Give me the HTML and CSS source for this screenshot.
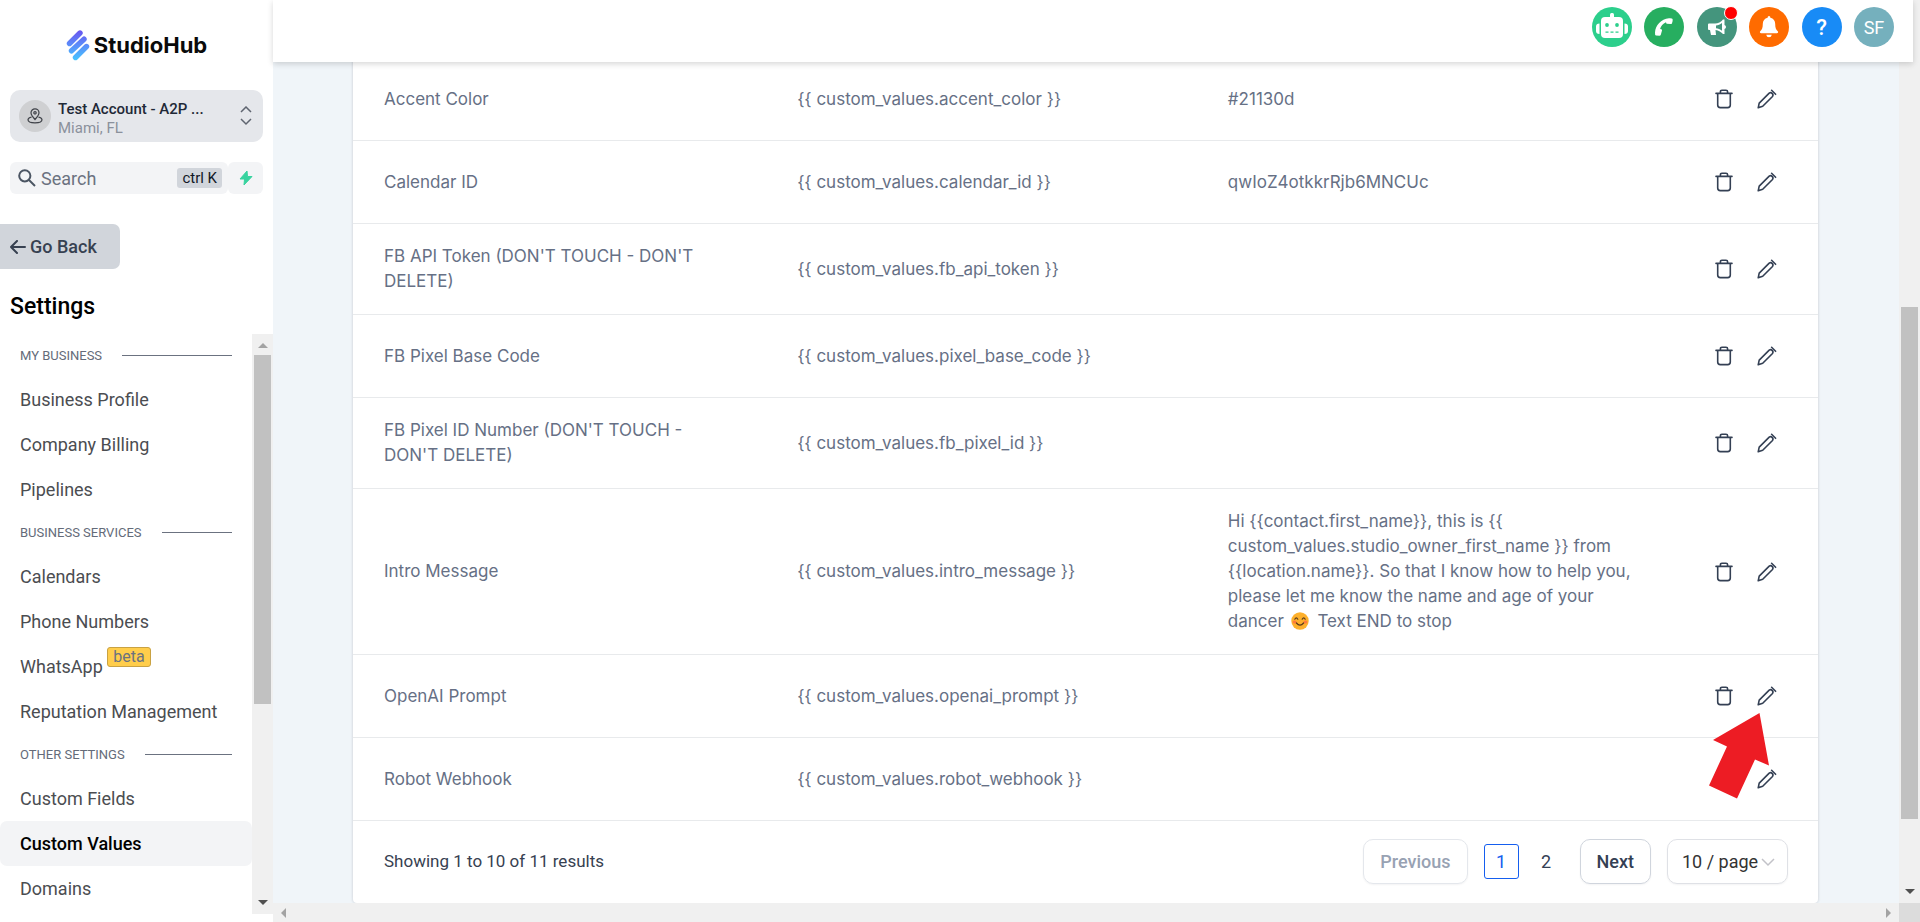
FILE: index.html
```html
<!DOCTYPE html>
<html lang="en">
<head>
<meta charset="utf-8">
<title>StudioHub - Custom Values</title>
<link rel="stylesheet" href="styles.css">
</head>
<body>
<svg class="sprite" aria-hidden="true">
  <symbol id="trash" viewBox="0 0 20 20"><path d="M2 4.4h16M6.4 4.2v-1.400q0-1.600 1.600-1.600h4q1.600 0 1.600 1.600v1.400M3.700 4.600v11.400q0 2.600 2.600 2.600h7.400q2.600 0 2.600-2.600V4.600"/></symbol>
  <symbol id="pencil" viewBox="0 0 20 20"><path d="M1.200 18.800l1-4.700L12.200 4.100q1.600-1 2.900.3 1.600 1.500.4 3.100L5.700 17.300zM14.600 1.300l4 4"/></symbol>
</svg>
<div class="app">
  <aside class="sidebar">
    <a class="logo" href="#" aria-label="StudioHub home">
      <svg width="24" height="32" viewBox="0 0 24 32" fill="none" stroke-linecap="round" stroke-width="5.400" aria-hidden="true">
        <defs><linearGradient id="lg" gradientUnits="userSpaceOnUse" x1="12" y1="0" x2="12" y2="32"><stop offset="0" stop-color="#6a4fee"/><stop offset=".5" stop-color="#5b8cf9"/><stop offset="1" stop-color="#45c8ff"/></linearGradient></defs>
        <path stroke="url(#lg)" d="M3.500 14.500L14 4M5.500 21.800L18 10.200M9.500 28.500L20.500 17.500"/>
      </svg>
      <span>StudioHub</span>
    </a>
    <button class="account" type="button">
      <span class="pin">
        <svg width="16" height="16" viewBox="0 0 16 16" fill="none" stroke="#3f4248" stroke-width="1.200" aria-hidden="true"><path d="M8 11.500C5.600 8.900 4 7 4 4.800a4 4 0 0 1 8 0C12 7 10.400 8.900 8 11.500z"/><circle cx="8" cy="4.800" r="1.200"/><path d="M4.600 9C2.500 9.500 1 10.400 1 11.700c0 1.900 3.100 3.100 7 3.100s7-1.200 7-3.100c0-1.300-1.500-2.200-3.600-2.700"/></svg>
      </span>
      <span class="account-text"><span class="account-name">Test Account - A2P ...</span><span class="account-place">Miami, FL</span></span>
      <svg class="chevrons" width="12" height="20" viewBox="0 0 12 20" fill="none" stroke="#5f6570" stroke-width="1.500" aria-hidden="true"><path d="M1 6l5-5 5 5M1 13l5 5 5-5"/></svg>
    </button>
    <div class="search-row">
      <label class="search">
        <svg width="18" height="18" viewBox="0 0 18 18" fill="none" stroke="#4b5563" stroke-width="2" aria-hidden="true"><circle cx="6.800" cy="6.800" r="5.600"/><path d="M11 11l6 6"/></svg>
        <input type="text" placeholder="Search" aria-label="Search">
        <kbd>ctrl K</kbd>
      </label>
      <button class="bolt" type="button" aria-label="Quick actions">
        <svg width="14" height="16" viewBox="0 0 14 16" fill="#38d39f" stroke="#38d39f" stroke-width="1" stroke-linejoin="round" aria-hidden="true"><path d="M8 1L1 9h4.500L5 15l8-8.500H8.500z"/></svg>
      </button>
    </div>
    <button class="back" type="button">
      <svg width="16" height="14" viewBox="0 0 16 14" fill="none" stroke="#374151" stroke-width="2" stroke-linecap="round" stroke-linejoin="round" aria-hidden="true"><path d="M7 1L1 7l6 6M1 7h14"/></svg>
      Go Back
    </button>
    <h1>Settings</h1>
    <div class="nav-wrap">
      <nav aria-label="Settings">
        <h2>MY BUSINESS</h2>
        <a href="#">Business Profile</a>
        <a href="#">Company Billing</a>
        <a href="#">Pipelines</a>
        <h2>BUSINESS SERVICES</h2>
        <a href="#">Calendars</a>
        <a href="#">Phone Numbers</a>
        <a href="#">WhatsApp <span class="beta">beta</span></a>
        <a href="#">Reputation Management</a>
        <h2>OTHER SETTINGS</h2>
        <a href="#">Custom Fields</a>
        <a href="#" class="active" aria-current="page">Custom Values</a>
        <a href="#">Domains</a>
      </nav>
      <div class="vbar" aria-hidden="true">
        <svg class="tip light" viewBox="0 0 10 5"><path d="M0 5L5 0l5 5z"/></svg>
        <div class="track nav-track"><div class="thumb"></div></div>
        <svg class="tip" viewBox="0 0 10 5"><path d="M0 0l5 5 5-5z"/></svg>
      </div>
    </div>
  </aside>
  <div class="page">
    <header>
      <div class="tools">
        <button class="tool robot" type="button" aria-label="Assistant"><svg width="34" height="28" viewBox="0 0 34 28" fill="#fff" aria-hidden="true"><rect x="6" y="4" width="22" height="21" rx="4"/><rect x="15" y="0" width="4" height="6" rx="1.500"/><path d="M4.500 10.500v10.500Q1 21 1 18v-4.500q0-3 3.500-3zM29.500 10.500v10.500Q33 21 33 18v-4.500q0-3-3.500-3z"/><g fill="#2ccf8c"><circle cx="12" cy="12" r="1.900"/><circle cx="22" cy="12" r="1.900"/><path d="M10.500 18.500h3v1.300h-3zM15.500 18.500h3v1.300h-3zM20.500 18.500h3v1.300h-3z"/></g></svg></button>
        <button class="tool phone" type="button" aria-label="Call"><svg width="20" height="20" viewBox="0 0 20 20" fill="#fff" aria-hidden="true"><path d="M1 15.500C1.500 8 7 2 15 1.200q3.300-.2 3.600.8.400 2-.6 4.200-.4 1-1.400.9l-3.800-.3q-.8-.1-.7-1.200l-.1-.4C9 6.500 6.700 9.200 6.100 12l1.200.3q1 .3.700 1.200L6.800 17.700q-.3 1-1.300 1L2 18.500q-1.200-.2-1-3z"/></svg></button>
        <button class="tool horn" type="button" aria-label="Announcements"><svg width="20" height="18" viewBox="0 0 20 18" aria-hidden="true"><path fill="#fff" fill-rule="evenodd" d="M2 5.500H8c3 0 6-1.500 8-4h1.500v5.500q1.500.7 1.500 2t-1.500 2v5H16c-1.500-1.800-4.500-3.600-7.500-4l.5 5H4L3 12H2Q1 12 1 11V6.500q0-1 1-1zM15 5C13.200 6.500 11 7.300 9 7.500v2.700c2 .3 4.200 1 6 2.500z"/></svg><span class="dot"></span></button>
        <button class="tool bell" type="button" aria-label="Notifications"><svg width="20" height="22" viewBox="0 0 20 22" fill="#fff" aria-hidden="true"><path d="M10 0q1.400 0 1.400 1.700c3.100.7 4.800 3 4.800 6.300 0 4 .8 5.500 2.600 7.200q.7.800.1 1.600-.3.400-1 .4H2.100q-.7 0-1-.4-.6-.8.100-1.600C3 13.500 3.800 12 3.800 8c0-3.300 1.700-5.600 4.800-6.300Q8.600 0 10 0zM7.200 18.800h5.600Q12.300 21.300 10 21.300T7.200 18.800z"/></svg></button>
        <button class="tool help" type="button" aria-label="Help">?</button>
        <button class="tool user" type="button" aria-label="Profile">SF</button>
      </div>
    </header>
    <div class="body">
      <main>
        <section class="card">
          <table aria-label="Custom values">
            <colgroup><col class="c-name"><col class="c-key"><col class="c-value"><col class="c-act"></colgroup>
            <tbody>
              <tr><td>Accent Color</td><td>{{ custom_values.accent_color }}</td><td>#21130d</td><td><div class="acts"><button type="button" aria-label="Delete"><svg><use href="#trash"/></svg></button><button type="button" aria-label="Edit"><svg><use href="#pencil"/></svg></button></div></td></tr>
              <tr><td>Calendar ID</td><td>{{ custom_values.calendar_id }}</td><td>qwIoZ4otkkrRjb6MNCUc</td><td><div class="acts"><button type="button" aria-label="Delete"><svg><use href="#trash"/></svg></button><button type="button" aria-label="Edit"><svg><use href="#pencil"/></svg></button></div></td></tr>
              <tr><td>FB API Token (DON'T TOUCH - DON'T DELETE)</td><td>{{ custom_values.fb_api_token }}</td><td></td><td><div class="acts"><button type="button" aria-label="Delete"><svg><use href="#trash"/></svg></button><button type="button" aria-label="Edit"><svg><use href="#pencil"/></svg></button></div></td></tr>
              <tr><td>FB Pixel Base Code</td><td>{{ custom_values.pixel_base_code }}</td><td></td><td><div class="acts"><button type="button" aria-label="Delete"><svg><use href="#trash"/></svg></button><button type="button" aria-label="Edit"><svg><use href="#pencil"/></svg></button></div></td></tr>
              <tr><td>FB Pixel ID Number (DON'T TOUCH - DON'T DELETE)</td><td>{{ custom_values.fb_pixel_id }}</td><td></td><td><div class="acts"><button type="button" aria-label="Delete"><svg><use href="#trash"/></svg></button><button type="button" aria-label="Edit"><svg><use href="#pencil"/></svg></button></div></td></tr>
              <tr><td>Intro Message</td><td>{{ custom_values.intro_message }}</td><td>Hi {{contact.first_name}}, this is {{ custom_values.studio_owner_first_name }} from {{location.name}}. So that I know how to help you, please let me know the name and age of your dancer <svg class="smile" viewBox="0 0 18 18" aria-hidden="true"><circle cx="9" cy="9" r="8.700" fill="#fdb02c"/><ellipse cx="3.600" cy="10" rx="2" ry="1.600" fill="#ff7a3d"/><ellipse cx="14.400" cy="10" rx="2" ry="1.600" fill="#ff7a3d"/><path d="M3.800 7.200q1.500-2.600 3 0M11.200 7.200q1.500-2.600 3 0M5.400 11q3.600 4.400 7.200 0" fill="none" stroke="#5b3a1c" stroke-width="1.200" stroke-linecap="round"/></svg> Text END to stop</td><td><div class="acts"><button type="button" aria-label="Delete"><svg><use href="#trash"/></svg></button><button type="button" aria-label="Edit"><svg><use href="#pencil"/></svg></button></div></td></tr>
              <tr><td>OpenAI Prompt</td><td>{{ custom_values.openai_prompt }}</td><td></td><td><div class="acts"><button type="button" aria-label="Delete"><svg><use href="#trash"/></svg></button><button type="button" aria-label="Edit"><svg><use href="#pencil"/></svg></button></div></td></tr>
              <tr><td>Robot Webhook</td><td>{{ custom_values.robot_webhook }}</td><td></td><td><div class="acts"><button type="button" aria-label="Delete"><svg><use href="#trash"/></svg></button><button type="button" aria-label="Edit"><svg><use href="#pencil"/></svg></button><svg class="pointer" viewBox="0 0 60 86" aria-hidden="true"><path fill="#ed1c24" d="M50.500 0L60 52.500 46 46.500 28 85.500 0 72.500 18 33.500 4 27z"/></svg></div></td></tr>
            </tbody>
          </table>
          <footer>
            <p>Showing 1 to 10 of 11 results</p>
            <div class="pager">
              <button class="step" type="button" disabled>Previous</button>
              <div class="pages"><button class="num current" type="button" aria-current="page">1</button><button class="num" type="button">2</button></div>
              <button class="step" type="button">Next</button>
              <div class="size">
                <select aria-label="Rows per page"><option>10 / page</option></select>
                <svg width="14" height="9" viewBox="0 0 14 9" fill="none" stroke="#c2c2c8" stroke-width="1.500" aria-hidden="true"><path d="M1 1l6 6 6-6"/></svg>
              </div>
            </div>
          </footer>
        </section>
      </main>
      <div class="vbar page-vbar" aria-hidden="true">
        <div class="track page-track"><div class="thumb"></div></div>
        <svg class="tip" viewBox="0 0 10 5"><path d="M0 0l5 5 5-5z"/></svg>
      </div>
    </div>
    <div class="hbar" aria-hidden="true">
      <div class="hbar-run"><svg viewBox="0 0 5 10"><path d="M5 0L0 5l5 5z"/></svg><svg viewBox="0 0 5 10"><path d="M0 0l5 5-5 5z"/></svg></div>
      <div class="corner"></div>
    </div>
  </div>
</div>
</body>
</html>
```
FILE: styles.css
```css
* { box-sizing: border-box; }
body { margin: 0; font: 18px/25px Roboto, sans-serif; color: #374151; background: #fff; }
button, input, select { font: inherit; color: inherit; border: 0; margin: 0; padding: 0; background: none; }
button { cursor: pointer; }
h1, h2, p { margin: 0; }
svg { flex: none; }
.sprite { position: absolute; width: 0; height: 0; }
.app { display: flex; height: 100vh; overflow: hidden; }

.sidebar { display: flex; flex-direction: column; flex: none; width: 273px; padding-bottom: 8px; background: #fff; }
.logo { display: flex; align-items: center; justify-content: center; gap: 4px; height: 90px; color: #0a0a0a; text-decoration: none; font: bold 22px/32px Inter, sans-serif; }
.account { display: flex; align-items: center; gap: 7px; height: 52px; margin: 0 10px; padding: 0 11px 0 9px; border-radius: 10px; background: #e5e7eb; text-align: left; }
.pin { display: grid; place-items: center; flex: none; width: 32px; height: 32px; border-radius: 50%; background: #cfd0d2; }
.account-text { display: flex; flex-direction: column; flex: 1; padding-top: 5px; line-height: 19px; white-space: nowrap; }
.account-name { color: #1f2937; font-size: 15px; font-weight: 500; }
.account-place { color: #8b919c; font-size: 15px; }
.search-row { display: flex; height: 32px; margin: 20px 10px 0; }
.search { display: flex; align-items: center; flex: 1; gap: 5px; min-width: 0; padding: 0 6px 0 8px; border-radius: 6px; background: #f3f4f6; }
.search input { flex: 1; min-width: 0; width: 0; outline: 0; }
.search input::placeholder { color: #6b7280; opacity: 1; }
kbd { padding: 0 5px; border-radius: 3px; background: #d1d5db; color: #111827; font: 15px/20px Roboto, sans-serif; }
.bolt { display: grid; place-items: center; width: 35px; border-radius: 6px; background: #f3f4f6; }
.back { display: flex; align-items: center; align-self: flex-start; gap: 4px; width: 120px; height: 45px; margin-top: 30px; padding-left: 10px; border-radius: 0 7px 7px 0; background: #d1d5db; font-weight: 500; }
h1 { margin: 23px 10px 12px; color: #000; font-size: 23px; font-weight: 500; line-height: 30px; }
.nav-wrap { display: flex; flex: 1; min-height: 0; }
nav { flex: 1; padding-top: 1px; overflow: hidden; }
h2 { display: flex; align-items: center; gap: 20px; height: 42px; padding: 0 20px 2px; color: #646b79; font-size: 13px; font-weight: 400; white-space: nowrap; }
h2::after { content: ""; flex: 1; height: 1px; background: #6b7280; }
nav a { display: block; height: 45px; padding-left: 20px; border-radius: 7px; color: #4b4d51; line-height: 45px; text-decoration: none; }
nav a.active { background: #f3f4f6; color: #000; font-weight: 500; }
.beta { display: inline-block; padding: 0 5px; border: 1px solid #c9a243; border-radius: 3px; background: #ffcd4b; color: #6b7280; font-size: 16px; line-height: 18px; vertical-align: 11px; }

.vbar { display: flex; flex-direction: column; align-items: center; flex: none; width: 21px; padding: 9px 0; background: #f0f0f0; }
.tip { width: 10px; height: 5px; fill: #505050; }
.tip.light { fill: #a3a3a3; }
.track { flex: 1; width: 17px; }
.thumb { background: #c1c1c1; }
.nav-track { padding-top: 7px; }
.nav-track .thumb { height: 64%; }
.page-track { padding-top: 245px; }
.page-track .thumb { height: 88%; }
.page-vbar { padding-top: 0; }

.page { display: flex; flex-direction: column; flex: 1; min-width: 0; background: #f0f0f0; }
header { position: relative; display: flex; justify-content: flex-end; flex: none; height: 62px; margin-right: 7px; padding: 7px 19px 0 0; background: #fff; box-shadow: 0 2px 6px rgba(0, 0, 0, .16); }
.tools { display: flex; justify-content: space-between; width: 302px; }
.tool { position: relative; display: grid; place-items: center; width: 40px; height: 40px; border-radius: 50%; color: #fff; }
.robot { background: #2ccf8c; }
.phone { background: #27ae60; }
.horn { background: #44957d; }
.bell { background: #ff6b00; }
.help { background: #188bf6; font-size: 22px; font-weight: 500; }
.user { background: #75b0bd; }
.dot { position: absolute; top: -1px; right: -1px; width: 14px; height: 14px; border: 1px solid #fff; border-radius: 50%; background: #f00; }
.body { display: flex; flex: 1; min-height: 0; }
main { display: flex; flex-direction: column; justify-content: flex-end; flex: 1; min-width: 0; padding: 0 81px 0 80px; overflow: hidden; background: #f0f5f9; }
.card { flex: none; border-radius: 0 0 4px 4px; background: #fff; box-shadow: 0 0 3px rgba(16, 24, 40, .2); }
table { width: 100%; border-collapse: collapse; table-layout: fixed; }
.c-name { width: 28.2%; }
.c-key { width: 29.4%; }
.c-value { width: 33%; }
td { padding: 20px 31px; border-bottom: 1px solid #e8eaec; color: #667085; font-family: Inter, sans-serif; font-size: 17px; vertical-align: middle; }
td:last-child { padding: 0 41px 0 0; }
.acts { position: relative; display: flex; justify-content: flex-end; align-items: center; gap: 23px; height: 82px; }
.acts button { display: block; width: 20px; height: 20px; }
.acts button svg { display: block; width: 20px; height: 20px; fill: none; stroke: #344054; stroke-width: 1.600; stroke-linecap: round; stroke-linejoin: round; }
.acts .pointer { position: absolute; right: 8px; bottom: 21px; width: 60px; height: 86px; }
.smile { width: 18px; height: 18px; margin: 0 4px 0 2px; vertical-align: -3px; }
footer { display: flex; align-items: center; justify-content: space-between; height: 82px; padding: 0 30px 2px 31px; white-space: nowrap; }
footer p { font-size: 17px; }
.pager { display: flex; align-items: center; gap: 16px; color: #344054; }
.step { height: 45px; padding: 0 16px; border: 1px solid #d0d5dd; border-radius: 10px; box-shadow: 0 1px 2px rgba(16, 24, 40, .05); font-weight: 500; }
.step:disabled { border-color: #e4e7ec; color: #98a2b3; }
.pages { display: flex; gap: 10px; }
.num { width: 35px; height: 35px; border-radius: 3px; }
.num.current { border: 1px solid #155eef; color: #155eef; }
.size { position: relative; }
select { appearance: none; width: 121px; height: 45px; padding-left: 14px; border: 1px solid #dfe1e6; border-radius: 10px; box-shadow: 0 1px 2px rgba(16, 24, 40, .05); color: #333; }
.size svg { position: absolute; right: 13px; top: 19px; pointer-events: none; }
.hbar { display: flex; flex: none; height: 19px; background: #f0f0f0; }
.hbar-run { display: flex; align-items: center; justify-content: space-between; flex: 1; padding: 0 8px; }
.hbar svg { width: 5px; height: 10px; fill: #a3a3a3; }
.corner { width: 21px; background: #dcdcdc; }
```
